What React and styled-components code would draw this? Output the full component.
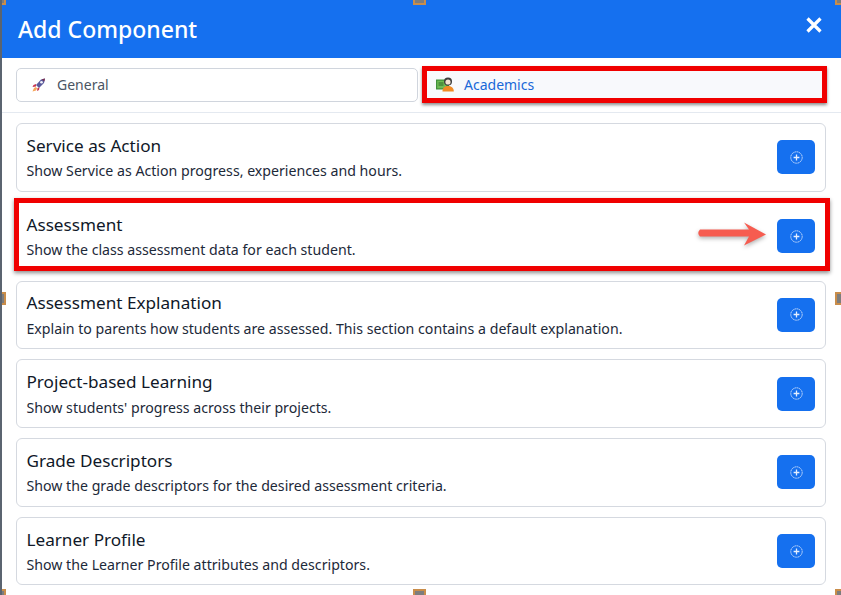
import React from "react";
import styled, { createGlobalStyle, css } from "styled-components";

const Global = createGlobalStyle`
  html, body { margin: 0; padding: 0; background: #fff; }
  body { font-family: "Noto Sans", "Open Sans", sans-serif; }
  * { box-sizing: border-box; }
`;

const Modal = styled.div`
  position: relative;
  width: 841px;
  height: 595px;
  overflow: hidden;
  background: #fff;
  border-left: 2px solid #5b6470;
`;

const Header = styled.header`
  height: 58px;
  background: #1570ef;
  display: flex;
  align-items: center;
  justify-content: space-between;
  padding: 0 19px 0 16px;
`;

const Title = styled.h1`
  margin: -1px 0 0;
  color: #fff;
  font-size: 23px;
  font-weight: 500;
  line-height: 58px;
`;

const Close = styled.button`
  border: 0;
  padding: 0;
  background: none;
  display: flex;
  margin-top: -8px;
`;

const Tabs = styled.nav`
  display: grid;
  grid-template-columns: 402px 402px;
  gap: 5px;
  padding: 10px 0 10px 14px;
  border-bottom: 1px solid #e4e9f0;
`;

const Tab = styled.div`
  position: relative;
  height: 34px;
  display: flex;
  align-items: center;
  gap: 10px;
  padding-left: 14px;
  padding-bottom: 1px;
  font-size: 14px;
  border-radius: 5px;
  ${(p) =>
    p.$active
      ? css`
          color: #1a68d8;
          background: #f8f9fc;
          padding-left: 13px;
          &::after {
            content: "";
            position: absolute;
            inset: -2px -2px -1px -1px;
            border: 5px solid #f00000;
            box-shadow: 0 2px 3px rgba(0, 0, 0, 0.45);
          }
        `
      : css`
          color: #4b5563;
          border: 1px solid #d0d5dd;
        `}
`;

const List = styled.main`
  display: grid;
  grid-auto-rows: 68.5px;
  row-gap: 10.3px;
  padding: 10px 15px 0 14px;
`;

const Card = styled.section`
  position: relative;
  display: flex;
  align-items: center;
  justify-content: space-between;
  padding: 0 10px 0 9.5px;
  border: 1px solid #d5d9e0;
  border-radius: 6px;
  background: #fff;
  ${(p) =>
    p.$highlight &&
    css`
      border-color: transparent;
      &::after {
        content: "";
        position: absolute;
        inset: -5px -5px -2px -3.5px;
        border: 5px solid #f00000;
        box-shadow: 0 2px 4px rgba(0, 0, 0, 0.45);
        pointer-events: none;
      }
    `}
`;

const CardText = styled.div`
  display: flex;
  flex-direction: column;
  gap: 3.4px;
  margin-top: -0.4px;
`;

const CardTitle = styled.h2`
  margin: 0;
  font-size: 17.15px;
  line-height: 24px;
  font-weight: 400;
  color: #101828;
`;

const CardDesc = styled.p`
  margin: 0;
  font-size: 14.17px;
  line-height: 19px;
  color: #1d2939;
`;

const AddButton = styled.button`
  width: 38px;
  height: 34px;
  border: 0;
  border-radius: 5px;
  background: #1570ef;
  display: flex;
  align-items: center;
  justify-content: center;
  padding: 0;
`;

const Arrow = styled.svg`
  position: absolute;
  right: 58px;
  top: 50%;
  margin-top: -15px;
  filter: drop-shadow(0 2px 2px rgba(0, 0, 0, 0.3));
`;

const Handle = styled.span`
  position: absolute;
  width: 13px;
  height: 13px;
  background: #7d7d7d;
  border: 2px solid #c98d4a;
  ${(p) => p.$pos}
`;

const RocketIcon = () => (
  <svg width="16" height="16" viewBox="0 0 16 16">
    <path d="M5 8 L10 2.5 L14 1.5 L13 6 L8 11 Z" fill="#5a5a9c" />
    <circle cx="10.5" cy="5.3" r="1.3" fill="#f4f4fa" />
    <path d="M10.8 2.3 L14 1.5 L13.3 4.6 Z" fill="#7a2e4f" />
    <path d="M5 7 L2.5 8 L1.5 10 L5 9.5 Z" fill="#c9344f" />
    <path d="M8.5 10.5 L8 13 L6 14 L6.5 11 Z" fill="#c9344f" />
    <path d="M5 10 L3 11 L1.5 14.5 L5 13.5 L6 11.5 Z" fill="#f6a65a" />
  </svg>
);

const AcademicsIcon = () => (
  <svg width="18" height="15" viewBox="0 0 18 15">
    <rect x="0" y="2.5" width="13" height="10" fill="#3f8f3a" />
    <rect x="1.2" y="3.7" width="9" height="7.6" fill="#6fbb55" />
    <path d="M2.5 6h5M2.5 8h5" stroke="#2c6b28" strokeWidth="1" />
    <circle cx="12" cy="4.4" r="4" fill="#3c3c3c" />
    <circle cx="12" cy="5" r="2.6" fill="#f2e3d2" />
    <path d="M6.5 14.5 C6.5 10.5 9 9 12 9 C15 9 17.8 10.5 17.8 14.5 Z" fill="#f08a24" />
  </svg>
);

const PlusCircle = () => (
  <svg width="13" height="13" viewBox="0 0 13 13" fill="none">
    <circle cx="6.5" cy="6.5" r="5.7" stroke="#dbe8fd" strokeWidth="0.9" strokeDasharray="1.4 0.5" />
    <path d="M6.5 3.6v5.8M3.6 6.5h5.8" stroke="#e6effe" strokeWidth="1.3" />
  </svg>
);

const items = [
  { title: "Service as Action", desc: "Show Service as Action progress, experiences and hours." },
  { title: "Assessment", desc: "Show the class assessment data for each student.", highlight: true },
  { title: "Assessment Explanation", desc: "Explain to parents how students are assessed. This section contains a default explanation." },
  { title: "Project-based Learning", desc: "Show students' progress across their projects." },
  { title: "Grade Descriptors", desc: "Show the grade descriptors for the desired assessment criteria." },
  { title: "Learner Profile", desc: "Show the Learner Profile attributes and descriptors." },
];

const handles = [
  "left:-9px;top:-8px;",
  "left:411px;top:-8px;",
  "right:-7px;top:-8px;",
  "left:-9px;top:292px;",
  "right:-7px;top:292px;",
  "left:-9px;top:589px;",
  "left:411px;top:589px;",
  "right:-7px;top:589px;",
];

export default function App() {
  return (
    <>
      <Global />
      <Modal>
        <Header>
          <Title>Add Component</Title>
          <Close aria-label="Close">
            <svg width="16" height="16" viewBox="0 0 16 16">
              <path d="M1.5 1.5 L14.5 14.5 M14.5 1.5 L1.5 14.5" stroke="#fff" strokeWidth="3.2" />
            </svg>
          </Close>
        </Header>
        <Tabs>
          <Tab>
            <RocketIcon />
            General
          </Tab>
          <Tab $active>
            <AcademicsIcon />
            Academics
          </Tab>
        </Tabs>
        <List>
          {items.map((it) => (
            <Card key={it.title} $highlight={it.highlight}>
              <CardText>
                <CardTitle>{it.title}</CardTitle>
                <CardDesc>{it.desc}</CardDesc>
              </CardText>
              {it.highlight && (
                <Arrow width="70" height="26" viewBox="0 0 70 26">
                  <path d="M3 8.5 H52 L47 1.5 L69 13.5 L47 24.5 L52 15.5 H3 Q-0.5 12 3 8.5 Z" fill="#f65c50" />
                </Arrow>
              )}
              <AddButton aria-label={`Add ${it.title}`}>
                <PlusCircle />
              </AddButton>
            </Card>
          ))}
        </List>
        {handles.map((h) => (
          <Handle key={h} $pos={h} />
        ))}
      </Modal>
    </>
  );
}
